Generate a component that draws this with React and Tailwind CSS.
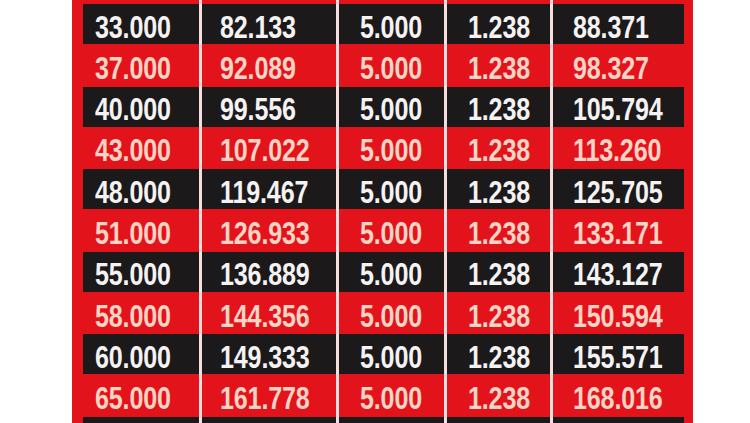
import React from 'react';

const rows = [
  ['33.000', '82.133', '5.000', '1.238', '88.371'],
  ['37.000', '92.089', '5.000', '1.238', '98.327'],
  ['40.000', '99.556', '5.000', '1.238', '105.794'],
  ['43.000', '107.022', '5.000', '1.238', '113.260'],
  ['48.000', '119.467', '5.000', '1.238', '125.705'],
  ['51.000', '126.933', '5.000', '1.238', '133.171'],
  ['55.000', '136.889', '5.000', '1.238', '143.127'],
  ['58.000', '144.356', '5.000', '1.238', '150.594'],
  ['60.000', '149.333', '5.000', '1.238', '155.571'],
  ['65.000', '161.778', '5.000', '1.238', '168.016'],
  ['', '', '', '', ''],
];

const pads = ['pl-[12px]', 'pl-[18px]', 'pl-[21px]', 'pl-[21px]', 'pl-[20px]'];

function Line() {
  return <div className="bg-[#f6dede]" />;
}

function Row({ cells, dark }) {
  const cellBg = dark ? 'bg-[#1b191a]' : '';
  const text = dark ? 'text-[#f4f2f2]' : 'text-[#ffd4c4]';
  return (
    <div
      className={`grid grid-cols-[116px_3px_134px_3px_105px_3px_103px_3px_131px] ${
        dark ? 'h-[40px]' : 'h-[42.6px]'
      }`}
    >
      {cells.map((c, i) => (
        <React.Fragment key={i}>
          {i > 0 && <Line />}
          <div className={`flex items-center pt-[6px] ${pads[i]} ${cellBg}`}>
            {c && (
              <span
                className={`inline-block origin-left scale-x-[0.81] text-[31px] font-bold leading-none tracking-[-0.2px] ${text}`}
              >
                {c}
              </span>
            )}
          </div>
        </React.Fragment>
      ))}
    </div>
  );
}

export default function App() {
  return (
    <div className="h-[423px] w-[750px] overflow-hidden bg-white">
      <div
        className="ml-[72px] w-[621px] bg-[#e3131c] pl-[11px] pr-[9px]"
        style={{ fontFamily: '"Liberation Sans", Arial, sans-serif' }}
      >
        <div className="grid h-[4px] grid-cols-[116px_3px_134px_3px_105px_3px_103px_3px_131px]">
          <div />
          <Line />
          <div />
          <Line />
          <div />
          <Line />
          <div />
          <Line />
          <div />
        </div>
        {rows.map((r, i) => (
          <Row key={i} cells={r} dark={i % 2 === 0} />
        ))}
      </div>
    </div>
  );
}
